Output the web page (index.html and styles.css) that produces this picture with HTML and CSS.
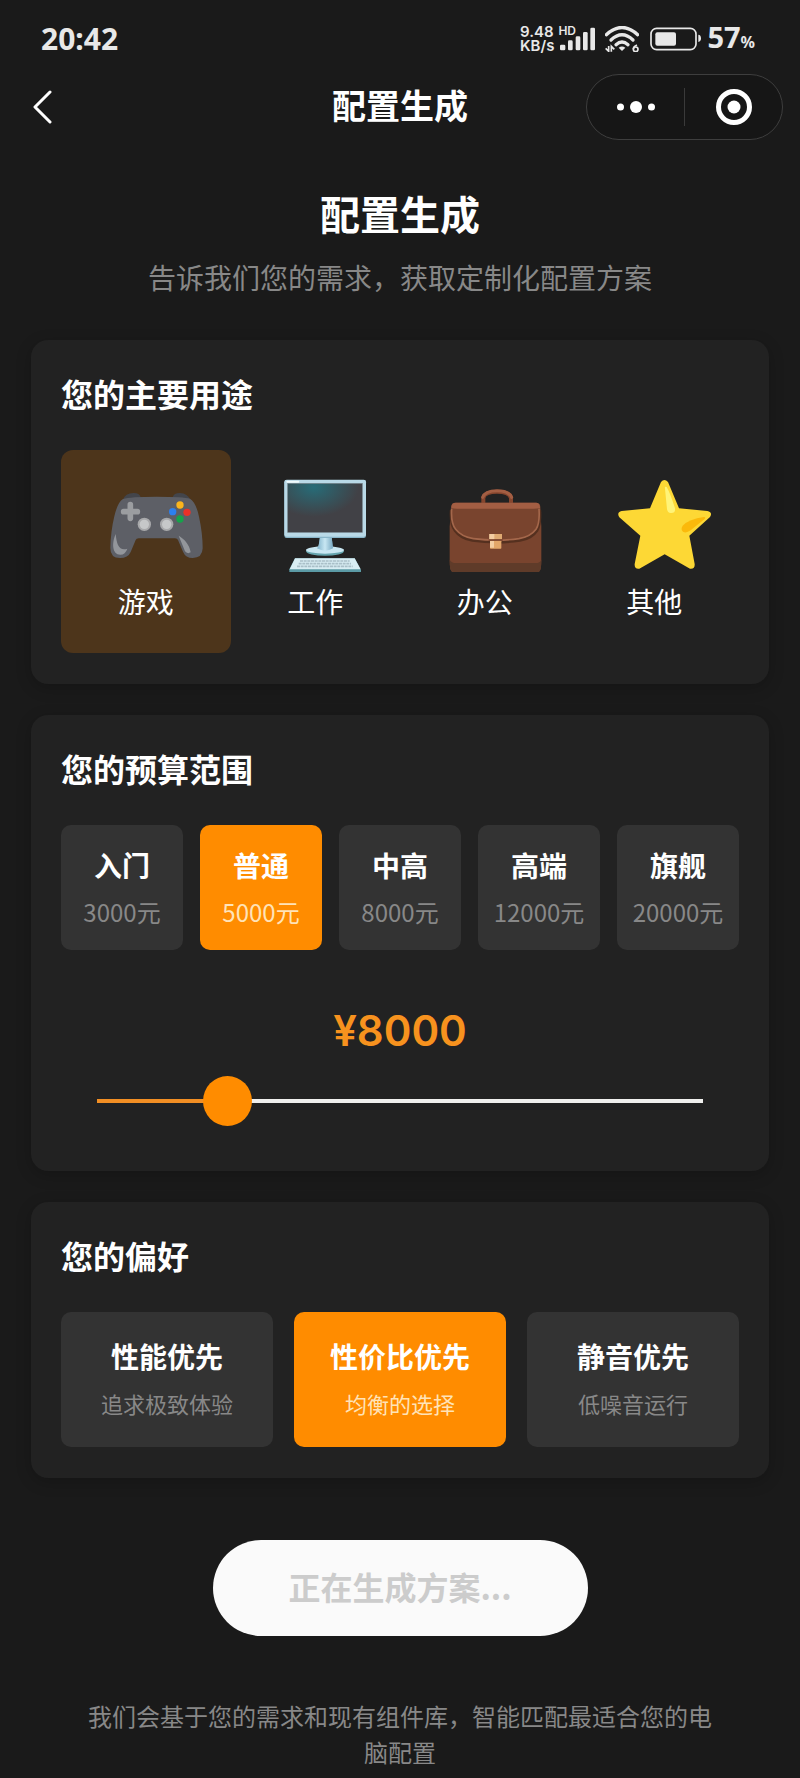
FILE: index.html
```html
<!DOCTYPE html>
<html lang="zh-CN">
<head>
<meta charset="utf-8">
<meta name="viewport" content="width=device-width, initial-scale=1">
<title>配置生成</title>
<link rel="stylesheet" href="styles.css">
</head>
<body>
<div class="status-bar">
  <span class="clock">20:42</span>
  <div class="status-icons">
    <div class="net-speed"><span>9.48</span><span>KB/s</span></div>
    <div class="signal">
      <span class="signal-type">HD</span>
      <svg width="38" height="26" viewBox="177 78 114 78" fill="#e8e8e8" aria-hidden="true">
        <rect x="183" y="134" width="16" height="17" rx="4"/>
        <rect x="207" y="121" width="14" height="30" rx="4"/>
        <rect x="230" y="109" width="14" height="42" rx="4"/>
        <rect x="252" y="96" width="14" height="55" rx="4"/>
        <rect x="274" y="83" width="14" height="68" rx="4"/>
      </svg>
    </div>
    <svg class="wifi" width="34" height="26" viewBox="317 78 102 78" fill="none" stroke="#e8e8e8" aria-hidden="true">
      <path d="M321 104Q368 61 415 104" stroke-width="10" stroke-linecap="round"/>
      <path d="M335 120Q368 89 401 120" stroke-width="10" stroke-linecap="round"/>
      <path d="M350 134Q368 118 386 134" stroke-width="10" stroke-linecap="round"/>
      <path d="M358 143Q368 136 378 143L368 153Z" fill="#e8e8e8" stroke="none"/>
      <path d="M328 138V154L319 145M336 155V139L345 148" stroke-width="5"/>
      <path d="M413 135Q402 139 402 148" stroke-width="5"/>
      <circle cx="409" cy="148" r="7" stroke-width="5"/>
    </svg>
    <svg class="battery" width="51" height="24" viewBox="453 80 153 72" aria-hidden="true">
      <rect x="456" y="84" width="135" height="64" rx="17" fill="none" stroke="#e8e8e8" stroke-width="5"/>
      <rect x="469" y="96" width="62" height="40" rx="6" fill="#e8e8e8"/>
      <path d="M598 103Q606 104 606 114Q606 124 598 125Z" fill="#e8e8e8"/>
    </svg>
    <span class="charge">57<small>%</small></span>
  </div>
</div>

<header class="nav">
  <button class="back" type="button" aria-label="返回">
    <svg width="19" height="34" viewBox="0 0 19 34" fill="none" stroke="#fff" stroke-width="3" stroke-linecap="round" stroke-linejoin="round"><path d="M17 2L2 17L17 32"/></svg>
  </button>
  <span class="nav-title">配置生成</span>
  <div class="capsule">
    <button type="button" aria-label="更多">
      <svg width="38" height="14" viewBox="0 0 38 14" fill="#fff"><circle cx="3.5" cy="7" r="3.5"/><circle cx="19" cy="7" r="6"/><circle cx="34.5" cy="7" r="3.5"/></svg>
    </button>
    <button type="button" aria-label="关闭">
      <svg width="36" height="36" viewBox="0 0 36 36"><circle cx="18" cy="18" r="15.5" fill="none" stroke="#fff" stroke-width="5"/><circle cx="18" cy="18" r="6.5" fill="#fff"/></svg>
    </button>
  </div>
</header>

<main class="page">
  <h1 class="page-title">配置生成</h1>
  <p class="page-lead">告诉我们您的需求，获取定制化配置方案</p>

  <section class="card">
    <h2>您的主要用途</h2>
    <div class="uses">
      <button class="use active" type="button" aria-pressed="true">
        <span class="use-icon">
          <svg viewBox="234 444 288 288" aria-hidden="true">
            <path d="M279 510Q285 489 311 489Q329 489 332 502L428 502Q431 489 450 489Q473 490 481 510Z" fill="#43454b"/>
            <path d="M279 507Q300 500 380 500Q460 500 480 506Q498 517 507 560Q518 610 518 655Q517 684 488 684Q467 684 459 665L444 630Q442 625 435 625H326Q319 625 317 630L302 666Q294 684 270 684Q241 684 241 654Q242 605 253 559Q263 516 279 507Z" fill="#5d5f66"/>
            <path d="M257 612C245 638 246 674 271 674Q286 674 292 656Q272 662 264 645Q259 634 257 612ZM446 617C461 626 478 641 482 667Q472 673 465 664Z" fill="#93969b"/>
            <path d="M301 524V565M281 545H322" stroke="#9b9da0" stroke-width="17" stroke-linecap="round"/>
            <circle cx="343" cy="583" r="20" fill="#a8a9ab"/><circle cx="343" cy="583" r="14" fill="#c6c8c9"/>
            <circle cx="410" cy="583" r="20" fill="#a8a9ab"/><circle cx="410" cy="583" r="14" fill="#c6c8c9"/>
            <circle cx="450" cy="525" r="11" fill="#fbb51c"/><circle cx="428" cy="545" r="11" fill="#2c80ef"/>
            <circle cx="471" cy="547" r="11" fill="#eb3029"/><circle cx="450" cy="567" r="11" fill="#16a34b"/>
          </svg>
        </span>
        <span>游戏</span>
      </button>
      <button class="use" type="button" aria-pressed="false">
        <span class="use-icon">
          <svg viewBox="743 444 288 288" aria-hidden="true">
            <defs>
              <radialGradient id="screen" cx="0.35" cy="0.08" r="0.6"><stop offset="0" stop-color="#276c78"/><stop offset="1" stop-color="#414146"/></radialGradient>
              <linearGradient id="stand"><stop offset="0" stop-color="#7fb3cb"/><stop offset="0.5" stop-color="#c8e7f3"/><stop offset="1" stop-color="#78a9c2"/></linearGradient>
            </defs>
            <path d="M872 619H907L911 660H866Z" fill="url(#stand)"/>
            <ellipse cx="887" cy="664" rx="57" ry="13" fill="#65a5ae"/>
            <ellipse cx="887" cy="660" rx="57" ry="11" fill="#c9e7f2"/>
            <path d="M872 622H907L911 655Q888 669 863 655Q870 648 872 622Z" fill="url(#stand)"/>
            <rect x="765" y="450" width="245" height="174" rx="7" fill="#89b6ca"/>
            <rect x="765" y="449" width="245" height="171" rx="7" fill="#b9d9e7"/>
            <rect x="775" y="460" width="224" height="147" fill="url(#screen)" stroke="#75858c" stroke-width="2"/>
            <path d="M774 455H807" stroke="#f2fbfd" stroke-width="6" stroke-linecap="round"/>
            <path d="M797 685H976L995 720V726H780V718Z" fill="#5b9aa5"/>
            <path d="M797 685H976L994 718H781Z" fill="#d8edf3"/>
            <path d="M812 693H961M808 701H965M803 709H970" stroke="#a9bfc8" stroke-width="5" stroke-dasharray="9 2"/>
          </svg>
        </span>
        <span>工作</span>
      </button>
      <button class="use" type="button" aria-pressed="false">
        <span class="use-icon">
          <svg viewBox="140 144 288 288" aria-hidden="true">
            <path d="M249 219V204Q252 185 290 185Q328 185 332 204V219" fill="none" stroke="#86462e" stroke-width="12"/>
            <path d="M247 202Q254 182 290 182Q326 182 334 202" fill="none" stroke="#a35e43" stroke-width="9" stroke-linecap="round"/>
            <path d="M153 228Q154 218 166 218H407Q419 218 420 230L423 290V390Q423 426 414 426H157Q148 426 148 390V290Z" fill="#79442e"/>
            <path d="M148 389Q154 399 166 399H405Q420 399 423 389Q423 426 414 426H157Q148 426 148 389Z" fill="#5f3b29"/>
            <path d="M153 240Q150 284 164 301Q181 325 216 331Q290 341 359 331Q394 325 410 301Q421 282 418 240" fill="none" stroke="#55301f" stroke-width="9"/>
            <path d="M154 236Q151 280 166 298Q184 321 219 326Q290 335 356 326Q391 320 407 298Q419 280 416 236" fill="#79442e" stroke="#a4674b" stroke-width="5"/>
            <path d="M153 234V230Q154 218 166 218H407Q418 218 419 230V234Q410 236 400 236H170Q160 236 153 234Z" fill="#a35e43"/>
            <rect x="267" y="312" width="38" height="16" fill="#dfaa72"/>
            <rect x="269" y="332" width="34" height="24" rx="2" fill="#e3a669"/>
            <path d="M267 312H282V328H267ZM269 333H281V353H269Z" fill="#f3cda2"/>
            <path d="M265 330H307" stroke="#713b26" stroke-width="4"/>
          </svg>
        </span>
        <span>办公</span>
      </button>
      <button class="use" type="button" aria-pressed="false">
        <span class="use-icon">
          <svg viewBox="648 144 288 288" aria-hidden="true">
            <path d="M783 156Q793 144 804 156L837 235L922 243Q939 247 930 261L868 317L884 402Q885 418 870 416L794 373L718 416Q703 418 704 402L721 317L658 262Q649 247 665 243L750 235Z" fill="#fdd835"/>
            <path d="M795 176Q793 168 800 171Q811 190 825 235Q827 250 812 249Q803 249 801 238Z" fill="#fff478"/>
            <path d="M848 287Q867 267 912 261Q919 262 913 268L872 301Q858 311 849 305Q841 297 848 287Z" fill="#fbb90b"/>
          </svg>
        </span>
        <span>其他</span>
      </button>
    </div>
  </section>

  <section class="card">
    <h2>您的预算范围</h2>
    <div class="options budgets">
      <button class="option" type="button" aria-pressed="false"><strong>入门</strong><span>3000元</span></button>
      <button class="option active" type="button" aria-pressed="true"><strong>普通</strong><span>5000元</span></button>
      <button class="option" type="button" aria-pressed="false"><strong>中高</strong><span>8000元</span></button>
      <button class="option" type="button" aria-pressed="false"><strong>高端</strong><span>12000元</span></button>
      <button class="option" type="button" aria-pressed="false"><strong>旗舰</strong><span>20000元</span></button>
    </div>
    <label class="amount" for="budget">¥8000</label>
    <input class="slider" id="budget" type="range" min="2000" max="30000" step="500" value="8000" style="--fill: 21.4%">
  </section>

  <section class="card">
    <h2>您的偏好</h2>
    <div class="options preferences">
      <button class="option" type="button" aria-pressed="false"><strong>性能优先</strong><span>追求极致体验</span></button>
      <button class="option active" type="button" aria-pressed="true"><strong>性价比优先</strong><span>均衡的选择</span></button>
      <button class="option" type="button" aria-pressed="false"><strong>静音优先</strong><span>低噪音运行</span></button>
    </div>
  </section>

  <button class="submit" type="button" disabled>正在生成方案...</button>
  <p class="note">我们会基于您的需求和现有组件库，智能匹配最适合您的电脑配置</p>
</main>
</body>
</html>
```
FILE: styles.css
```css
* {
  box-sizing: border-box;
}

body {
  margin: 0;
  background: #1a1a1a;
  color: #fff;
  font-family: "Noto Sans CJK SC", "Noto Sans", sans-serif;
}

button {
  margin: 0;
  padding: 0;
  border: 0;
  background: none;
  color: inherit;
  font: inherit;
}

svg {
  display: block;
  flex: none;
}

h1, h2, p {
  margin: 0;
}

/* Status bar */
.status-bar {
  display: flex;
  align-items: center;
  justify-content: space-between;
  height: 74px;
  padding: 4px 45px 0 41px;
  color: #e8e8e8;
  font-family: "Noto Sans", sans-serif;
  font-weight: 700;
}

.clock {
  font-size: 30px;
  line-height: 36px;
}

.status-icons {
  display: flex;
  align-items: center;
}

.net-speed {
  display: flex;
  flex-direction: column;
  margin-right: 4px;
  font-family: Inter, sans-serif;
  font-size: 15px;
  font-weight: 600;
  line-height: 14px;
}

.signal {
  position: relative;
  margin-right: 9px;
}

.signal-type {
  position: absolute;
  top: 0;
  left: 0;
  font-family: Inter, sans-serif;
  font-size: 12px;
  font-weight: 600;
  line-height: 10px;
}

.wifi {
  margin-right: 11px;
}

.battery {
  margin-right: 6px;
}

.charge {
  font-size: 29px;
  line-height: 36px;
}

.charge small {
  font-size: 16px;
}

/* Navigation */
.nav {
  display: grid;
  grid-template-columns: 1fr auto 1fr;
  align-items: center;
  padding: 0 17px;
}

.back {
  justify-self: start;
  padding: 8px 16px;
}

.nav-title {
  padding-bottom: 4px;
  font-size: 34px;
  font-weight: 700;
  line-height: 52px;
}

.capsule {
  display: flex;
  justify-self: end;
  width: 197px;
  height: 66px;
  padding: 13px 0;
  border: 1px solid #3e3e3e;
  border-radius: 33px;
  background: #161616;
}

.capsule button {
  display: flex;
  flex: 1;
  align-items: center;
  justify-content: center;
}

.capsule button + button {
  border-left: 1px solid #3a3a3a;
}

/* Page */
.page {
  display: flex;
  flex-direction: column;
  padding: 45px 31px 8px;
}

.page-title {
  margin-bottom: 18px;
  font-size: 40px;
  font-weight: 700;
  line-height: 56px;
  text-align: center;
}

.page-lead {
  margin-bottom: 45px;
  color: #888;
  font-size: 28px;
  line-height: 36px;
  text-align: center;
}

.card {
  display: flex;
  flex-direction: column;
  margin-bottom: 31px;
  padding: 29px 30px 31px;
  border-radius: 17px;
  background: #222;
  box-shadow: 0 4px 16px rgba(0, 0, 0, 0.2);
}

.card h2 {
  margin-bottom: 33px;
  font-size: 32px;
  font-weight: 700;
  line-height: 48px;
}

.uses {
  display: grid;
  grid-template-columns: repeat(4, 1fr);
}

.use {
  display: flex;
  flex-direction: column;
  align-items: center;
  gap: 7px;
  padding: 28px 0 32px;
  border-radius: 12px;
  font-size: 28px;
  line-height: 40px;
}

.use.active {
  background: #4d351b;
}

/* The glyph is wider than its slot and runs over to the right. */
.use-icon {
  display: flex;
  width: 76px;
}

.use-icon svg {
  width: 96px;
  height: 96px;
}

.options {
  display: grid;
}

.budgets {
  grid-template-columns: repeat(5, 1fr);
  gap: 17px;
}

.preferences {
  grid-template-columns: repeat(3, 1fr);
  gap: 21px;
}

.option {
  display: flex;
  flex-direction: column;
  align-items: center;
  gap: 9px;
  border-radius: 10px;
  background: #333;
}

.option strong {
  font-size: 28px;
  font-weight: 700;
  line-height: 40px;
}

.option span {
  color: #888;
  line-height: 36px;
}

.option.active {
  background: #ff8c00;
}

.option.active span {
  color: #ffe3b8;
}

.budgets .option {
  padding: 20px 0;
  font-size: 24px;
}

.preferences .option {
  padding: 24px 0 26px;
  font-size: 22px;
}

.amount {
  margin: 53px 0 17px;
  color: #f7921e;
  font-family: Inter, sans-serif;
  font-size: 42px;
  font-weight: 600;
  line-height: 56px;
  text-align: center;
}

.slider {
  height: 50px;
  margin: 0 12px 14px;
  background: none;
  appearance: none;
}

.slider::-webkit-slider-runnable-track {
  height: 50px;
  background: linear-gradient(90deg, #f28f24 var(--fill), #f0f0ee var(--fill)) 24px center / calc(100% - 48px) 4px no-repeat;
}

.slider::-webkit-slider-thumb {
  width: 49px;
  height: 50px;
  border-radius: 50%;
  background: #ff8c00;
  appearance: none;
}

.submit {
  align-self: center;
  width: 375px;
  height: 96px;
  margin-top: 31px;
  padding-bottom: 4px;
  border-radius: 48px;
  background: #fafafa;
  color: #ccc;
  font-size: 32px;
  font-weight: 700;
}

.note {
  margin: 62px 50px 0;
  color: #888;
  font-size: 24px;
  line-height: 36px;
  text-align: center;
}
```
